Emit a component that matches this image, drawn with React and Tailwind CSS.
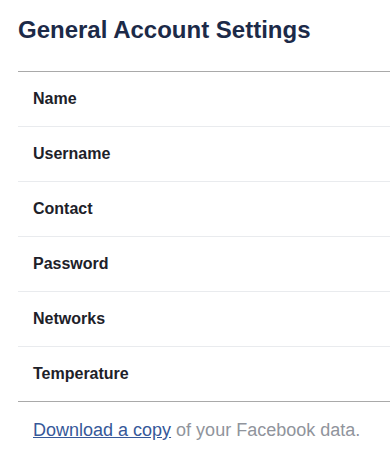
const rows = ["Name", "Username", "Contact", "Password", "Networks", "Temperature"];

export default function App() {
  return (
    <div className="bg-white h-[449px] pl-[18px] font-['Liberation_Sans',Arial,sans-serif]">
      <h1 className="pt-[14px] h-[71px] text-[24px] leading-[32px] font-bold text-[#1c2a48]">
        General Account Settings
      </h1>
      <ul className="border-t border-b border-[#a9a9a9]">
        {rows.map((r, i) => (
          <li
            key={r}
            className={
              "flex items-center pl-[15px] pb-[1px] text-[16px] font-bold text-[#1d2129] " +
              (i < rows.length - 1 ? "h-[55px] border-b border-[#e9ebee]" : "h-[54px]")
            }
          >
            {r}
          </li>
        ))}
      </ul>
      <p className="pl-[15px] pt-[16px] text-[18px] leading-[24px] text-[#90949c]">
        <a href="#" className="text-[#365899] underline">
          Download a copy
        </a>{" "}
        of your Facebook data.
      </p>
    </div>
  );
}
